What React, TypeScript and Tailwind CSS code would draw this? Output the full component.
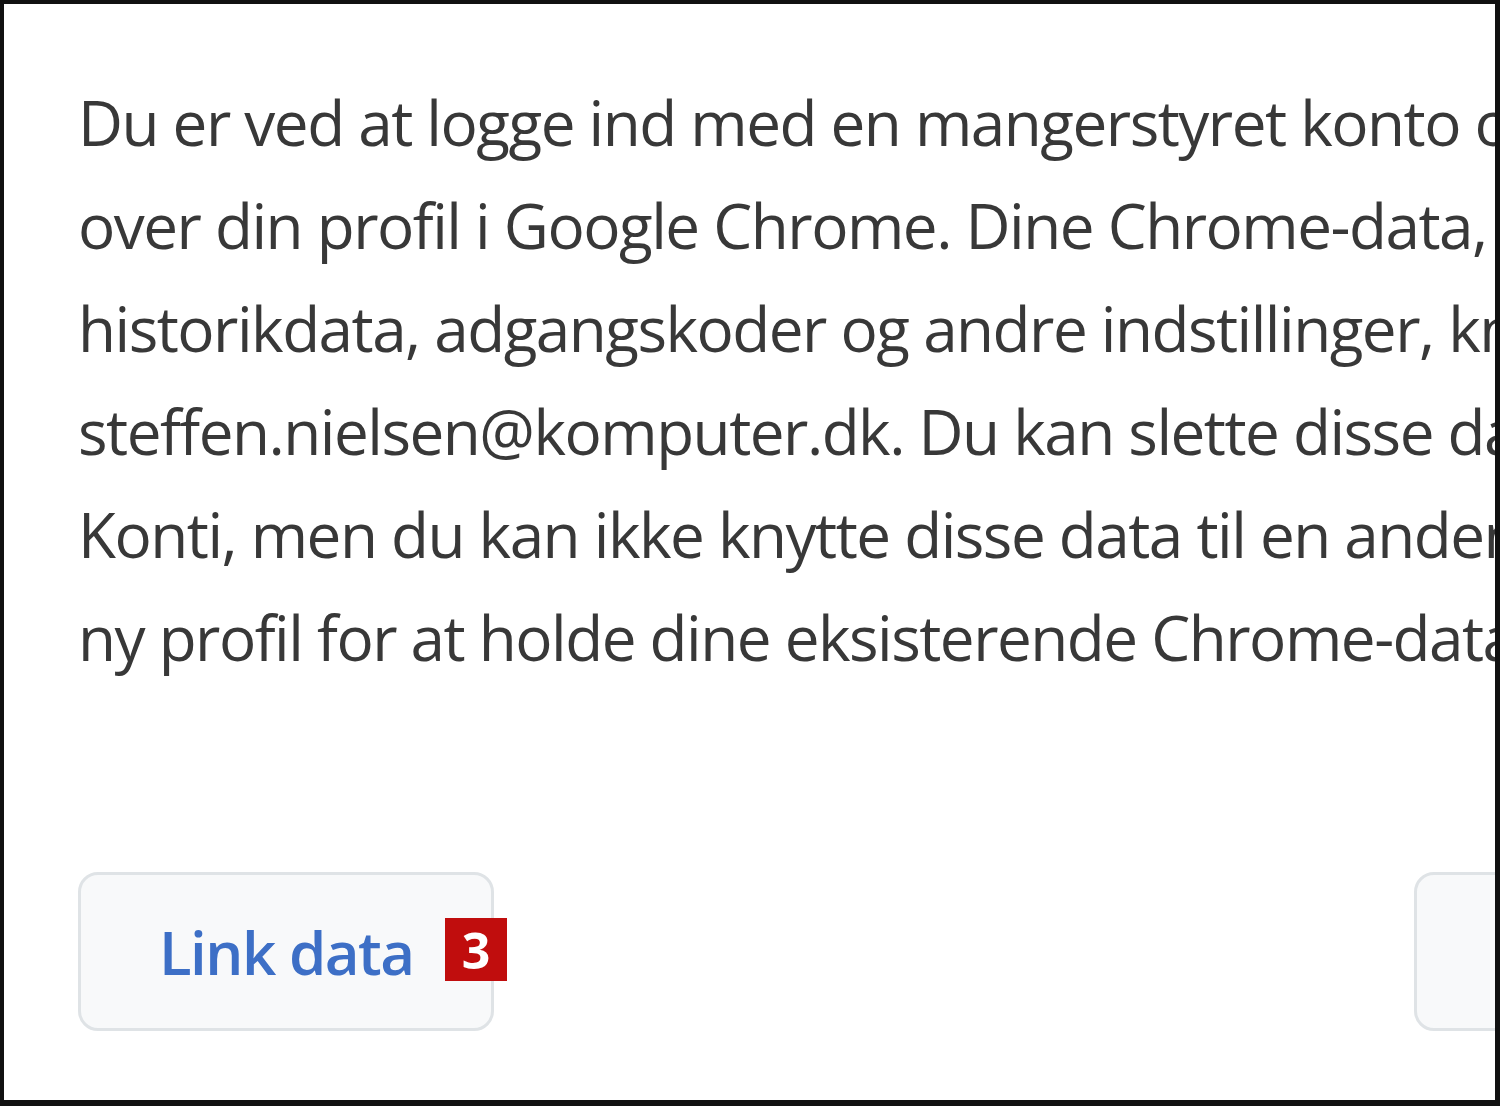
export default function App() {
  const lines = [
    "Du er ved at logge ind med en mangerstyret konto og giver administratoren kontrol",
    "over din profil i Google Chrome. Dine Chrome-data, f.eks. dine apps, bogmærker,",
    "historikdata, adgangskoder og andre indstillinger, knyttes permanent til",
    "steffen.nielsen@komputer.dk. Du kan slette disse data via betjeningspanelet for Google",
    "Konti, men du kan ikke knytte disse data til en anden konto. Du kan også oprette en",
    "ny profil for at holde dine eksisterende Chrome-data adskilt.",
  ];

  return (
    <div className="h-[1106px] w-[1500px] overflow-hidden border-t-[4px] border-l-[4px] border-r-[5px] border-b-[6px] border-[#111] bg-white font-['Open_Sans','Noto_Sans',sans-serif]">
      <div className="flex h-full flex-col overflow-hidden pl-[74px] pt-[67px]">
        <div className="text-[62px] leading-[103px] tracking-[-1.5px] text-[#383838]">
          {lines.map((line) => (
            <div key={line} className="whitespace-nowrap">
              {line}
            </div>
          ))}
        </div>

        <div className="mt-[183px] flex items-center gap-[920px] whitespace-nowrap">
          <div className="relative">
            <button className="flex h-[159px] w-[416px] items-center rounded-[20px] border-[3px] border-[#dfe3e6] bg-[#f8f9fa] pl-[78px] text-[60px] font-semibold tracking-[-1.5px] text-[#3d6fc6]">
              Link data
            </button>
            <span className="absolute left-[367px] top-[46px] flex h-[63px] w-[62px] items-center justify-center bg-[#c00d0d] text-[50px] font-bold leading-none text-white">
              3
            </span>
          </div>
          <button className="h-[159px] w-[300px] shrink-0 rounded-[20px] border-[3px] border-[#dfe3e6] bg-[#f8f9fa]" />
        </div>
      </div>
    </div>
  );
}
